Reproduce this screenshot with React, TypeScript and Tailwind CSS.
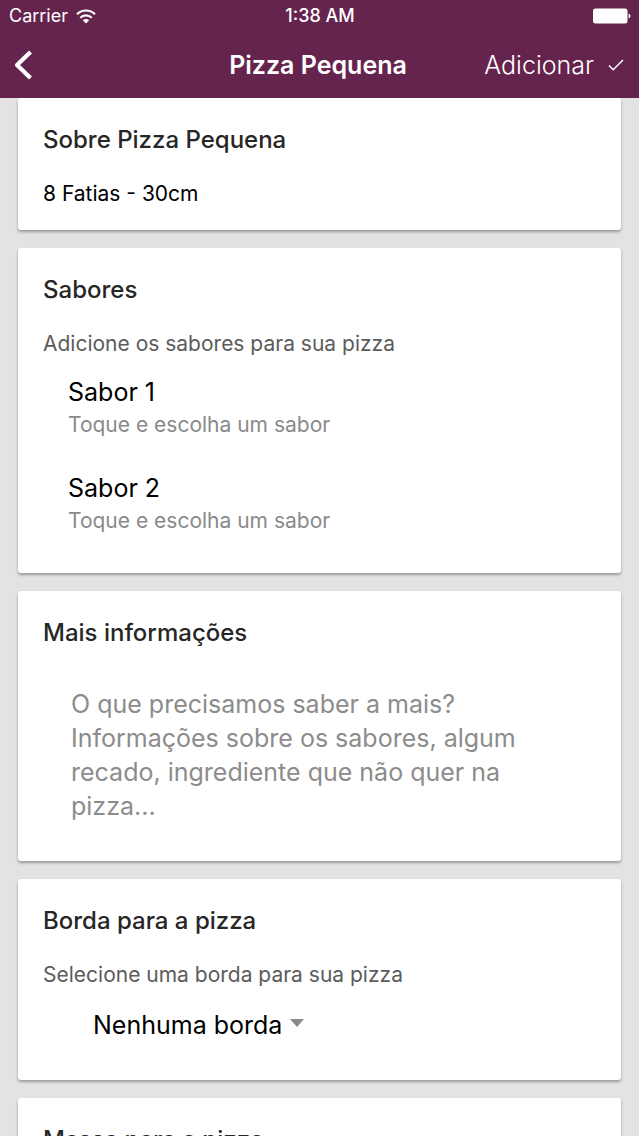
import { useState } from "react";
import type { ReactNode } from "react";

const flavors = [
  { id: 1, label: "Sabor 1", hint: "Toque e escolha um sabor" },
  { id: 2, label: "Sabor 2", hint: "Toque e escolha um sabor" },
];

const crusts = ["Nenhuma borda", "Catupiry", "Cheddar"];

function StatusBar() {
  return (
    <div className="grid h-8 grid-cols-[1fr_auto_1fr] items-center pl-[9px] pr-2 text-[18px] leading-6">
      <div className="flex items-center gap-2">
        <span>Carrier</span>
        <svg className="h-[15px] w-5" viewBox="0 0 20 15" fill="none" stroke="currentColor" strokeWidth="2.2" aria-hidden="true">
          <path d="M1 5.2a12.8 12.8 0 0 1 18 0" />
          <path d="M4.3 8.7a8.1 8.1 0 0 1 11.4 0" />
          <path d="M10 14.5 6.8 11.2a4.6 4.6 0 0 1 6.4 0Z" fill="currentColor" stroke="none" />
        </svg>
      </div>
      <span className="font-medium">1:38 AM</span>
      <svg className="h-4 w-[38px] justify-self-end" viewBox="0 0 38 16" fill="currentColor" aria-hidden="true">
        <rect x="0" y="0.5" width="34.5" height="15" rx="2.5" />
        <path d="M35.6 5.500c2.400.8 2.400 4.200 0 5Z" />
      </svg>
    </div>
  );
}

function Navbar() {
  return (
    <nav className="grid h-[66px] grid-cols-[1fr_auto_1fr] items-center pl-3 pr-[15px]">
      <button type="button" aria-label="Voltar" className="justify-self-start">
        <svg className="h-[30px] w-5" viewBox="0 0 20 30" fill="none" stroke="currentColor" strokeWidth="4.2" strokeLinejoin="round" aria-hidden="true">
          <path d="M18.5 2 5 15l13.5 13" />
        </svg>
      </button>
      <h1 className="text-[25px] font-semibold leading-8">Pizza Pequena</h1>
      <button type="button" className="flex items-center gap-[14px] justify-self-end text-[25px] font-light leading-8">
        Adicionar
        <svg className="h-3 w-4" viewBox="0 0 16 12" fill="none" stroke="currentColor" strokeWidth="1.5" aria-hidden="true">
          <path d="m1 6.5 4.2 4.2L15 1" />
        </svg>
      </button>
    </nav>
  );
}

function Card({ title, subtitle, children }: { title: string; subtitle?: string; children?: ReactNode }) {
  return (
    <section className="rounded-[3px] bg-white px-[25px] pt-[25px] pb-[23px] shadow-[0_2px_3px_rgba(0,0,0,0.32)]">
      <h2 className="text-[24px] font-medium leading-[34px] text-[#262626]">{title}</h2>
      {subtitle && <p className="mt-6 text-[21px] leading-[26px] text-[#5c5c5c]">{subtitle}</p>}
      {children}
    </section>
  );
}

export default function App() {
  const [crust, setCrust] = useState(crusts[0]);
  const [notes, setNotes] = useState("");

  return (
    <div className="flex h-screen flex-col overflow-hidden bg-[#e4e2e3] font-['Inter',sans-serif]">
      <header className="relative z-10 shrink-0 bg-[#65244e] text-white">
        <StatusBar />
        <Navbar />
      </header>

      <main className="flex min-h-0 flex-1 flex-col gap-[18px] overflow-hidden px-[18px] *:shrink-0">
        <Card title="Sobre Pizza Pequena">
          <p className="mt-6 text-[21px] leading-[26px] text-black">8 Fatias - 30cm</p>
        </Card>

        <Card title="Sabores" subtitle="Adicione os sabores para sua pizza">
          <ul className="mt-[18px] flex flex-col gap-[30px] pb-[13px]">
            {flavors.map((f) => (
              <li key={f.id}>
                <button type="button" className="block w-full px-[25px] text-left">
                  <span className="block text-[25px] leading-[34px] text-black">{f.label}</span>
                  <span className="block text-[21px] leading-8 text-[#8a8a8a]">{f.hint}</span>
                </button>
              </li>
            ))}
          </ul>
        </Card>

        <Card title="Mais informações">
          <textarea
            rows={4}
            value={notes}
            onChange={(e) => setNotes(e.target.value)}
            aria-label="Mais informações"
            placeholder="O que precisamos saber a mais? Informações sobre os sabores, algum recado, ingrediente que não quer na pizza..."
            className="mt-6 block w-full resize-none overflow-hidden px-7 pt-[13px] pb-[15px] text-[25px] leading-[34px] outline-none placeholder:text-[#8c8c8c]"
          />
        </Card>

        <Card title="Borda para a pizza" subtitle="Selecione uma borda para sua pizza">
          <div className="mt-5 flex items-center gap-2 pb-[15px] pl-[50px]">
            <select
              value={crust}
              onChange={(e) => setCrust(e.target.value)}
              aria-label="Borda para a pizza"
              className="field-sizing-content appearance-none text-[25px] leading-[34px] text-black outline-none"
            >
              {crusts.map((c) => (
                <option key={c}>{c}</option>
              ))}
            </select>
            <svg className="mb-1 h-2 w-[14px]" viewBox="0 0 14 8" fill="#8a8a8a" aria-hidden="true">
              <path d="M0 0h14L7 8Z" />
            </svg>
          </div>
        </Card>

        <Card title="Massa para a pizza" />
      </main>
    </div>
  );
}
